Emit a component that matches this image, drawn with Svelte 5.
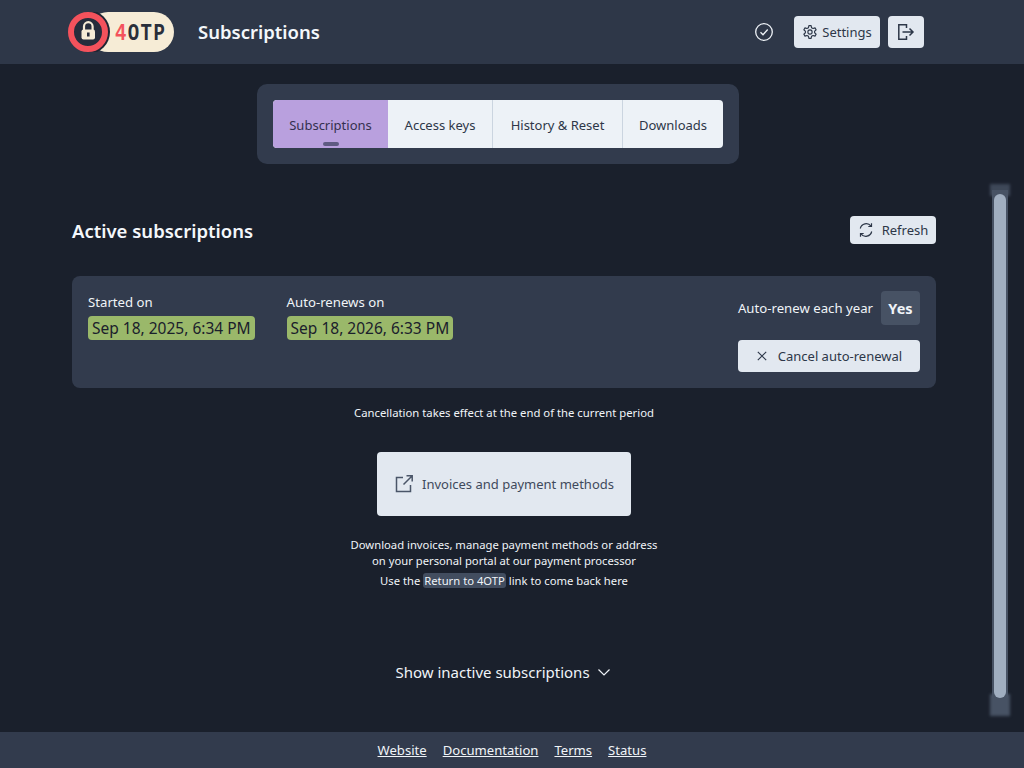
<script>
  const tabs = ['Subscriptions', 'Access keys', 'History & Reset', 'Downloads'];
  const links = ['Website', 'Documentation', 'Terms', 'Status'];
</script>

<div class="page">
  <header class="top">
    <div class="brand">
      <svg class="logo" width="106" height="40" viewBox="0 0 106 40" aria-label="4OTP">
        <rect x="20" y="0" width="86" height="40" rx="20" fill="#f6ecd6" />
        <circle cx="20" cy="20" r="22" fill="#1f2533" />
        <rect x="-4" y="-4" width="24" height="48" fill="#2e3748" />
        <circle cx="20" cy="20" r="17" fill="#262d3c" stroke="#f4525c" stroke-width="6" />
        <path d="M16 18v-3.500a4.300 4.300 0 0 1 8.600 0V18" fill="none" stroke="#f6ecd6" stroke-width="2.200" />
        <rect x="13.500" y="17.500" width="13.500" height="10" rx="2" fill="#f6ecd6" />
        <rect x="19" y="20.500" width="2.600" height="4" fill="#262d3c" />
        <g transform="translate(47 27.500) scale(1 1.300)">
          <text class="logotext"><tspan fill="#f4525c">4</tspan><tspan fill="#2a2f3a">OTP</tspan></text>
        </g>
      </svg>
      <h1>Subscriptions</h1>
    </div>
    <div class="actions">
      <svg class="check" width="20" height="20" viewBox="0 0 20 20" fill="none" stroke="#eef2f7" stroke-width="1.300">
        <circle cx="10" cy="10" r="8.300" />
        <path d="M6.500 10.300l2.500 2.500 4.700-5.300" />
      </svg>
      <button class="btn settings">
        <svg width="16" height="16" viewBox="0 0 24 24" fill="none" stroke="#2d3748" stroke-width="1.700" stroke-linejoin="round">
          <path d="M10.300 2.500h3.400l.6 3 2.300 1.300 2.900-1 1.700 3-2.300 2v2.400l2.300 2-1.700 3-2.900-1-2.300 1.300-.6 3h-3.400l-.6-3-2.300-1.300-2.900 1-1.700-3 2.300-2v-2.400l-2.300-2 1.700-3 2.900 1 2.300-1.300z" />
          <circle cx="12" cy="12" r="3.200" />
        </svg>
        Settings
      </button>
      <button class="btn logout" aria-label="Log out">
        <svg width="20" height="20" viewBox="0 0 20 20" fill="none" stroke="#2d3748" stroke-width="1.500">
          <path d="M10.500 6V2.800H2.800v14.400h7.700V14" />
          <path d="M6.500 10h10.500M13.500 6.500l3.500 3.500-3.500 3.500" />
        </svg>
      </button>
    </div>
  </header>

  <main class="body">
    <div class="tabbar">
      <div class="tabs">
        {#each tabs as tab, i}
          <div class="tab" class:active={i === 0}>{tab}</div>
        {/each}
      </div>
    </div>

    <section class="content">
      <div class="headrow">
        <h2>Active subscriptions</h2>
        <button class="btn refresh">
          <svg width="16" height="16" viewBox="0 0 16 16" fill="none" stroke="#2d3748" stroke-width="1.200">
            <path d="M2.300 6.500A6 6 0 0 1 13 4.200M13.700 9.500A6 6 0 0 1 3 11.800" />
            <path d="M13.500 1.300v3.200h-3.200M2.500 14.700v-3.200h3.200" />
          </svg>
          Refresh
        </button>
      </div>

      <div class="card">
        <div class="dates">
          <div class="date">
            <div>Started on</div>
            <span class="badge">Sep 18, 2025, 6:34 PM</span>
          </div>
          <div class="date">
            <div>Auto-renews on</div>
            <span class="badge">Sep 18, 2026, 6:33 PM</span>
          </div>
        </div>
        <div class="renew">
          <div class="renewrow">
            <span>Auto-renew each year</span>
            <span class="yes">Yes</span>
          </div>
          <button class="btn cancel">
            <svg width="12" height="12" viewBox="0 0 12 12" fill="none" stroke="#2d3748" stroke-width="1.100">
              <path d="M1.800 1.800l8.400 8.400M10.200 1.800l-8.400 8.400" />
            </svg>
            Cancel auto-renewal
          </button>
        </div>
      </div>

      <p class="note">Cancellation takes effect at the end of the current period</p>

      <button class="btn invoices">
        <svg width="20" height="20" viewBox="0 0 20 20" fill="none" stroke="#4a5568" stroke-width="1.500">
          <path d="M9 3.500H2.500v14h14V11" />
          <path d="M9.500 10.500L18 2M12.500 1.800h5.700v5.700" />
        </svg>
        Invoices and payment methods
      </button>

      <div class="help">
        <div>Download invoices, manage payment methods or address</div>
        <div>on your personal portal at our payment processor</div>
        <div class="use">Use the <span class="mark">Return to 4OTP</span> link to come back here</div>
      </div>

      <div class="inactive">
        Show inactive subscriptions
        <svg width="14" height="14" viewBox="0 0 14 14" fill="none" stroke="#eef2f7" stroke-width="1.200">
          <path d="M1.500 4.500L7 10l5.500-5.500" />
        </svg>
      </div>
    </section>

    <div class="scrollbar"><div class="thumb"></div></div>
  </main>

  <footer class="foot">
    {#each links as link}
      <a href="#top">{link}</a>
    {/each}
  </footer>
</div>

<style>
  :global(body) {
    margin: 0;
    background: #1a202c;
  }
  .page {
    width: 1024px;
    height: 768px;
    display: flex;
    flex-direction: column;
    overflow: hidden;
    background: #1a202c;
    color: #f0f4f8;
    font-family: "Noto Sans", "Open Sans", sans-serif;
    font-size: 13px;
  }
  .top {
    height: 64px;
    flex: none;
    box-sizing: border-box;
    padding: 0 100px 0 68px;
    display: flex;
    align-items: center;
    justify-content: space-between;
    background: #2e3748;
  }
  .brand {
    display: flex;
    align-items: center;
    gap: 24px;
  }
  .logo {
    display: block;
  }
  .logotext {
    font-family: "Liberation Mono", monospace;
    font-weight: 700;
    font-size: 19px;
    letter-spacing: 1.400px;
  }
  h1 {
    margin: 0;
    font-size: 18.500px;
    line-height: 28px;
    font-weight: 600;
    color: #f4f7fb;
  }
  .actions {
    display: flex;
    align-items: center;
  }
  .check {
    margin-right: 20px;
  }
  .btn {
    display: flex;
    align-items: center;
    justify-content: center;
    border: 0;
    padding: 0;
    background: #e2e8f0;
    color: #2d3748;
    border-radius: 4px;
    font: inherit;
  }
  .settings {
    width: 86px;
    height: 32px;
    gap: 4px;
  }
  .logout {
    width: 36px;
    height: 32px;
    margin-left: 8px;
  }
  .body {
    position: relative;
    flex: 1;
    min-height: 0;
    box-sizing: border-box;
    padding-right: 16px;
    display: flex;
    flex-direction: column;
    align-items: center;
  }
  .tabbar {
    margin-top: 20px;
    margin-right: 12px;
    padding: 16px;
    background: #323b4d;
    border-radius: 10px;
  }
  .tabs {
    display: grid;
    grid-template-columns: 115px 104px 130px 101px;
    height: 48px;
    border-radius: 4px;
    overflow: hidden;
    background: #edf2f7;
    color: #2d3748;
  }
  .tab {
    position: relative;
    display: flex;
    align-items: center;
    justify-content: center;
    padding-top: 2px;
    white-space: nowrap;
    border-left: 1px solid #cbd5e0;
  }
  .tab:first-child {
    border-left: 0;
  }
  .tab.active {
    background: #b9a0de;
    color: #35304f;
  }
  .tab.active + .tab {
    border-left: 0;
  }
  .tab.active::after {
    content: "";
    position: absolute;
    left: 50%;
    bottom: 2px;
    width: 16px;
    height: 4px;
    margin-left: -8px;
    border-radius: 2px;
    background: #5f5a82;
  }
  .content {
    width: 864px;
    display: flex;
    flex-direction: column;
    align-items: center;
  }
  .headrow {
    align-self: stretch;
    margin-top: 52px;
    display: flex;
    align-items: center;
    justify-content: space-between;
  }
  h2 {
    margin: 0;
    font-size: 18.500px;
    font-weight: 600;
    color: #f4f7fb;
  }
  .refresh {
    width: 86px;
    height: 28px;
    gap: 8px;
  }
  .card {
    align-self: stretch;
    box-sizing: border-box;
    margin-top: 32px;
    height: 112px;
    padding: 16px;
    display: flex;
    justify-content: space-between;
    background: #323b4d;
    border-radius: 8px;
    font-size: 13.200px;
  }
  .dates {
    display: flex;
    gap: 32px;
  }
  .date div {
    line-height: 20px;
  }
  .badge {
    display: block;
    margin-top: 4px;
    padding: 0 4px;
    height: 24px;
    line-height: 25px;
    border-radius: 4px;
    background: #9ab86a;
    color: #1a202c;
    font-size: 15.500px;
  }
  .renew {
    display: flex;
    flex-direction: column;
    gap: 15px;
    margin-top: -1px;
  }
  .renewrow {
    display: flex;
    align-items: center;
    justify-content: flex-end;
    gap: 8px;
  }
  .yes {
    width: 39px;
    height: 34px;
    display: flex;
    align-items: center;
    justify-content: center;
    border-radius: 4px;
    background: #475264;
    font-weight: 700;
    font-size: 14.500px;
  }
  .cancel {
    width: 182px;
    height: 32px;
    gap: 10px;
    font-size: 13px;
  }
  .note {
    margin: 16px 0 0;
    font-size: 11.300px;
    line-height: 17px;
  }
  .invoices {
    width: 254px;
    height: 64px;
    margin-top: 31px;
    gap: 8px;
    color: #3f4a5c;
  }
  .help {
    margin-top: 21px;
    text-align: center;
    font-size: 11.250px;
    line-height: 16px;
  }
  .use {
    margin-top: 4px;
  }
  .mark {
    padding: 0 1px;
    border-radius: 3px;
    background: #424d5f;
  }
  .inactive {
    margin-top: 72px;
    margin-left: -2px;
    display: flex;
    align-items: center;
    gap: 7px;
    font-size: 15px;
    line-height: 22px;
  }
  .scrollbar {
    position: absolute;
    left: 988px;
    top: 120px;
    width: 24px;
    height: 532px;
  }
  .scrollbar::before,
  .scrollbar::after {
    content: "";
    position: absolute;
    left: 2px;
    right: 2px;
    background: #475264;
    filter: blur(1.500px);
  }
  .scrollbar::before {
    top: 0;
    height: 12px;
    opacity: 0.8;
  }
  .scrollbar::after {
    bottom: 0;
    height: 22px;
  }
  .thumb {
    position: absolute;
    z-index: 1;
    left: 4px;
    right: 4px;
    top: 6px;
    bottom: 18px;
    background: #475264;
  }
  .thumb::before {
    content: "";
    position: absolute;
    left: 2px;
    right: 2px;
    top: 4px;
    bottom: 0;
    border-radius: 6px;
    background: #a0aec0;
  }
  .foot {
    height: 36px;
    flex: none;
    display: flex;
    align-items: center;
    justify-content: center;
    gap: 16px;
    background: #323b4d;
    font-size: 13.100px;
  }
  .foot a {
    color: #f0f4f8;
    text-decoration: underline;
  }
</style>
